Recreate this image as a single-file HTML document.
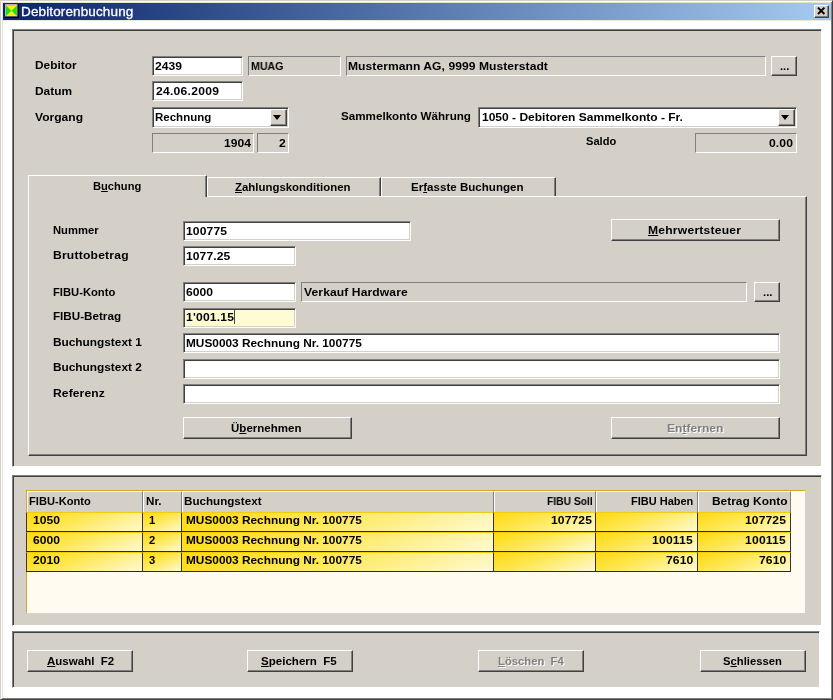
<!DOCTYPE html>
<html lang="de">
<head>
<meta charset="utf-8">
<title>Debitorenbuchung</title>
<style>
*{box-sizing:border-box;margin:0;padding:0}
html,body{width:833px;height:700px;overflow:hidden;background:#fff}
body{position:relative;font:bold 11px "Liberation Sans",sans-serif;color:#000}
.a{position:absolute;white-space:nowrap}
.t{position:absolute;white-space:nowrap;height:16px;line-height:16px;will-change:transform;transform-origin:0 0}
u{text-decoration:underline;text-underline-offset:1px}
#frame{left:0;top:0;width:833px;height:700px;border:1px solid;border-color:#d4d0c8 #404040 #404040 #d4d0c8;box-shadow:inset 1px 1px 0 #fff,inset -1px -1px 0 #808080,inset 2px 2px 0 #e4e1da}
#title{left:3px;top:3px;width:828px;height:17px;background:linear-gradient(90deg,#0a246a 0%,#a6caf0 100%)}
.tt{color:#fff;font:normal 13.5px "Liberation Sans",sans-serif;height:17px;line-height:17px;-webkit-text-stroke:.3px #fff}
#close{left:814px;top:5px;width:15px;height:13px;background:#d4d0c8;border:1px solid;border-color:#fff #404040 #404040 #fff;box-shadow:inset -1px -1px 0 #808080}
.panel{background:#d4d0c8;border:1px solid;border-color:#808080 #fff #fff #808080;box-shadow:inset 1px 1px 0 #404040}
.in{background:#fff;border:1px solid;border-color:#808080 #fff #fff #808080;box-shadow:inset 1px 1px 0 #404040,inset -1px -1px 0 #d4d0c8}
.ro{background:#d4d0c8;border:1px solid;border-color:#808080 #fff #fff #808080}
.btn{background:#d4d0c8;border:1px solid;border-color:#fff #404040 #404040 #fff;box-shadow:inset -1px -1px 0 #808080}
.dis{color:#808080;text-shadow:1px 1px 0 #fff}
.dd{width:17px;height:17px;right:1px;top:1px}
.dd i{position:absolute;left:2px;top:5px;width:0;height:0;border:4.5px solid transparent;border-top:5px solid #000;border-bottom:0}
.tab{background:#d4d0c8;border-top:1px solid #fff;border-left:1px solid #fff;border-right:1px solid #404040;box-shadow:inset -1px 0 0 #808080}
.hd{background:#d4d0c8;height:21px;top:491px;border-left:1px solid #fff;border-top:1px solid #fff;border-right:1px solid #808080}
.c{height:20px;border-right:1px solid #333;border-bottom:1px solid #2a2a20;border-top:1px solid #f2cc10;background:linear-gradient(160deg,#ffd90f 0%,#ffe752 42%,#fffad2 100%)}
.c0{border-left:1px solid #4a3608}
</style>
</head>
<body>
<div id="frame" class="a"></div>
<div id="title" class="a"></div>
<div class="a" style="left:3px;top:20px;width:828px;height:1px;background:#ebe8e2"></div>
<svg class="a" style="left:5px;top:4px" width="14" height="14" viewBox="0 0 14 14"><rect width="14" height="14" fill="#000"/><rect width="12.5" height="12.5" fill="#b8b0b0"/><polygon points="1,1.6 6.5,6.8 1,12" fill="#10e810"/><polygon points="11.8,1.6 6.5,6.8 11.8,12" fill="#10e810"/><polygon points="1,1.6 11.8,1.6 6.5,6.8" fill="#f8f400"/><polygon points="1,12 11.8,12 6.5,6.8" fill="#f8f400"/><path d="M1 1.6 L11.8 12" stroke="#b0b090" stroke-width=".6"/></svg>
<div id="close" class="a"><svg width="13" height="11" viewBox="0 0 13 11" style="position:absolute;left:0;top:0"><path d="M3 1.6 L9.4 8 M9.4 1.6 L3 8" stroke="#000" stroke-width="2" fill="none"/></svg></div>
<div class="a panel" style="left:12px;top:29px;width:810px;height:438px"></div>
<div class="a in" style="left:152px;top:56px;width:91px;height:20px"></div>
<div class="a ro" style="left:248px;top:56px;width:93px;height:20px"></div>
<div class="a ro" style="left:346px;top:56px;width:420px;height:20px"></div>
<div class="a btn" style="left:771px;top:56px;width:26px;height:20px"></div>
<div class="a in" style="left:152px;top:81px;width:91px;height:20px"></div>
<div class="a in" style="left:152px;top:107px;width:137px;height:21px"><div class="a btn dd"><i></i></div></div>
<div class="a in" style="left:478px;top:107px;width:319px;height:21px"><div class="a btn dd"><i></i></div></div>
<div class="a ro" style="left:152px;top:133px;width:102px;height:20px"></div>
<div class="a ro" style="left:257px;top:133px;width:32px;height:20px"></div>
<div class="a ro" style="left:695px;top:133px;width:102px;height:20px"></div>
<div class="a " style="left:28px;top:196px;width:779px;height:260px;background:#d4d0c8;border:1px solid;border-color:#fff #404040 #404040 #fff;box-shadow:inset -1px -1px 0 #808080"></div>
<div class="a tab" style="left:28px;top:175px;width:179px;height:22px"></div>
<div class="a tab" style="left:207px;top:177px;width:174px;height:19px"></div>
<div class="a tab" style="left:381px;top:177px;width:175px;height:19px"></div>
<div class="a in" style="left:183px;top:221px;width:228px;height:20px"></div>
<div class="a btn" style="left:611px;top:219px;width:169px;height:22px"></div>
<div class="a in" style="left:183px;top:246px;width:113px;height:20px"></div>
<div class="a in" style="left:183px;top:282px;width:113px;height:20px"></div>
<div class="a ro" style="left:301px;top:282px;width:446px;height:20px"></div>
<div class="a btn" style="left:754px;top:282px;width:26px;height:20px"></div>
<div class="a in" style="left:183px;top:308px;width:113px;height:20px;background:#fffbd2"></div>
<div class="a in" style="left:183px;top:333px;width:597px;height:20px"></div>
<div class="a in" style="left:183px;top:359px;width:597px;height:20px"></div>
<div class="a in" style="left:183px;top:384px;width:597px;height:20px"></div>
<div class="a btn" style="left:183px;top:417px;width:169px;height:22px"></div>
<div class="a btn" style="left:611px;top:417px;width:169px;height:22px"></div>
<div class="a " style="left:234px;top:310px;width:1px;height:14px;background:#404858"></div>
<div class="a panel" style="left:12px;top:475px;width:810px;height:151px"></div>
<div class="a " style="left:26px;top:490px;width:779px;height:123px;background:#fffbf0;border-top:1px solid #e0a030;border-left:1px solid #e0a030"></div>
<div class="a hd" style="left:27px;width:116px"></div>
<div class="a hd" style="left:143px;width:39px"></div>
<div class="a hd" style="left:182px;width:312px"></div>
<div class="a hd" style="left:494px;width:102px"></div>
<div class="a hd" style="left:596px;width:102px"></div>
<div class="a hd" style="left:698px;width:93px"></div>
<div class="a c c0" style="left:26px;top:512px;width:117px"></div>
<div class="a c" style="left:143px;top:512px;width:39px"></div>
<div class="a c" style="left:182px;top:512px;width:312px"></div>
<div class="a c" style="left:494px;top:512px;width:102px"></div>
<div class="a c" style="left:596px;top:512px;width:102px"></div>
<div class="a c" style="left:698px;top:512px;width:93px"></div>
<div class="a c c0" style="left:26px;top:532px;width:117px"></div>
<div class="a c" style="left:143px;top:532px;width:39px"></div>
<div class="a c" style="left:182px;top:532px;width:312px"></div>
<div class="a c" style="left:494px;top:532px;width:102px"></div>
<div class="a c" style="left:596px;top:532px;width:102px"></div>
<div class="a c" style="left:698px;top:532px;width:93px"></div>
<div class="a c c0" style="left:26px;top:552px;width:117px"></div>
<div class="a c" style="left:143px;top:552px;width:39px"></div>
<div class="a c" style="left:182px;top:552px;width:312px"></div>
<div class="a c" style="left:494px;top:552px;width:102px"></div>
<div class="a c" style="left:596px;top:552px;width:102px"></div>
<div class="a c" style="left:698px;top:552px;width:93px"></div>
<div class="a panel" style="left:12px;top:631px;width:808px;height:57px"></div>
<div class="a btn" style="left:27px;top:650px;width:106px;height:22px"></div>
<div class="a btn" style="left:247px;top:650px;width:106px;height:22px"></div>
<div class="a btn" style="left:478px;top:650px;width:106px;height:22px"></div>
<div class="a btn" style="left:700px;top:650px;width:106px;height:22px"></div>
<span class="t tt" style="left:21.00px;top:3px;letter-spacing:0.13px">Debitorenbuchung</span>
<span class="t" style="left:35.00px;top:57px;transform:scaleX(1.078)">Debitor</span>
<span class="t" style="left:35.00px;top:83px;transform:scaleX(1.081)">Datum</span>
<span class="t" style="left:35.00px;top:109px;transform:scaleX(1.096)">Vorgang</span>
<span class="t" style="left:155.00px;top:58px;letter-spacing:0.02px;transform:scaleX(1.100)">2439</span>
<span class="t" style="left:250.75px;top:58px;transform:scaleX(0.967)">MUAG</span>
<span class="t" style="left:348.00px;top:58px;letter-spacing:0.04px;transform:scaleX(1.100)">Mustermann AG, 9999 Musterstadt</span>
<span class="t" style="left:779.70px;top:58px;transform:scaleX(1.014)">...</span>
<span class="t" style="left:156.25px;top:83px;letter-spacing:0.24px;transform:scaleX(1.100)">24.06.2009</span>
<span class="t" style="left:155.00px;top:109px;transform:scaleX(1.046)">Rechnung</span>
<span class="t" style="left:341.00px;top:108px;transform:scaleX(1.058)">Sammelkonto Währung</span>
<span class="t" style="left:482.00px;top:109px;transform:scaleX(1.092)">1050 - Debitoren Sammelkonto - Fr.</span>
<span class="t" style="left:223.75px;top:135px;letter-spacing:0.02px;transform:scaleX(1.100)">1904</span>
<span class="t" style="left:278.75px;top:135px;letter-spacing:0.24px;transform:scaleX(1.100)">2</span>
<span class="t" style="left:585.80px;top:133px;transform:scaleX(1.008)">Saldo</span>
<span class="t" style="left:769.00px;top:135px;letter-spacing:0.10px;transform:scaleX(1.100)">0.00</span>
<span class="t" style="left:93.00px;top:178px;transform:scaleX(1.012)">B<u>u</u>chung</span>
<span class="t" style="left:234.50px;top:179px;transform:scaleX(1.038)"><u>Z</u>ahlungskonditionen</span>
<span class="t" style="left:411.25px;top:179px;transform:scaleX(1.052)">Er<u>f</u>asste Buchungen</span>
<span class="t" style="left:53.20px;top:222px;transform:scaleX(1.021)">Nummer</span>
<span class="t" style="left:53.20px;top:247px;letter-spacing:0.19px;transform:scaleX(1.100)">Bruttobetrag</span>
<span class="t" style="left:53.20px;top:284px;transform:scaleX(1.020)">FIBU-Konto</span>
<span class="t" style="left:53.20px;top:308px;transform:scaleX(1.060)">FIBU-Betrag</span>
<span class="t" style="left:53.20px;top:334px;transform:scaleX(1.076)">Buchungstext 1</span>
<span class="t" style="left:53.20px;top:359px;transform:scaleX(1.076)">Buchungstext 2</span>
<span class="t" style="left:53.20px;top:385px;letter-spacing:0.08px;transform:scaleX(1.100)">Referenz</span>
<span class="t" style="left:185.75px;top:223px;letter-spacing:0.13px;transform:scaleX(1.100)">100775</span>
<span class="t" style="left:185.75px;top:248px;letter-spacing:0.07px;transform:scaleX(1.100)">1077.25</span>
<span class="t" style="left:185.50px;top:284px;letter-spacing:0.02px;transform:scaleX(1.100)">6000</span>
<span class="t" style="left:185.50px;top:309px;letter-spacing:0.18px;transform:scaleX(1.100)">1'001.15</span>
<span class="t" style="left:185.50px;top:335px;transform:scaleX(1.077)">MUS0003 Rechnung Nr. 100775</span>
<span class="t" style="left:303.75px;top:284px;letter-spacing:0.09px;transform:scaleX(1.100)">Verkauf Hardware</span>
<span class="t" style="left:762.80px;top:284px;transform:scaleX(1.036)">...</span>
<span class="t" style="left:648.00px;top:222px;letter-spacing:0.20px;transform:scaleX(1.100)"><u>M</u>ehrwertsteuer</span>
<span class="t" style="left:230.75px;top:420px;transform:scaleX(1.048)">Ü<u>b</u>ernehmen</span>
<span class="t dis" style="left:667.00px;top:420px;transform:scaleX(1.098)">En<u>t</u>fernen</span>
<span class="t" style="left:28.75px;top:493px;transform:scaleX(1.011)">FIBU-Konto</span>
<span class="t" style="left:145.75px;top:493px;transform:scaleX(1.055)">Nr.</span>
<span class="t" style="left:184.25px;top:493px;transform:scaleX(1.057)">Buchungstext</span>
<span class="t" style="left:546.75px;top:493px;transform:scaleX(0.936)">FIBU Soll</span>
<span class="t" style="left:630.50px;top:493px">FIBU Haben</span>
<span class="t" style="left:712.00px;top:493px;transform:scaleX(1.084)">Betrag Konto</span>
<span class="t" style="left:32.50px;top:512px;letter-spacing:0.02px;transform:scaleX(1.100)">1050</span>
<span class="t" style="left:148.75px;top:512px;transform:scaleX(1.020)">1</span>
<span class="t" style="left:185.50px;top:512px;transform:scaleX(1.077)">MUS0003 Rechnung Nr. 100775</span>
<span class="t" style="left:550.77px;top:512px;letter-spacing:0.09px;transform:scaleX(1.100)">107725</span>
<span class="t" style="left:745.27px;top:512px;letter-spacing:0.09px;transform:scaleX(1.100)">107725</span>
<span class="t" style="left:32.50px;top:532px;letter-spacing:0.02px;transform:scaleX(1.100)">6000</span>
<span class="t" style="left:148.75px;top:532px;transform:scaleX(1.020)">2</span>
<span class="t" style="left:185.50px;top:532px;transform:scaleX(1.077)">MUS0003 Rechnung Nr. 100775</span>
<span class="t" style="left:652.02px;top:532px;letter-spacing:0.19px;transform:scaleX(1.100)">100115</span>
<span class="t" style="left:745.27px;top:532px;letter-spacing:0.19px;transform:scaleX(1.100)">100115</span>
<span class="t" style="left:32.50px;top:552px;letter-spacing:0.02px;transform:scaleX(1.100)">2010</span>
<span class="t" style="left:148.75px;top:552px;transform:scaleX(1.020)">3</span>
<span class="t" style="left:185.50px;top:552px;transform:scaleX(1.077)">MUS0003 Rechnung Nr. 100775</span>
<span class="t" style="left:665.68px;top:552px;letter-spacing:0.09px;transform:scaleX(1.100)">7610</span>
<span class="t" style="left:758.93px;top:552px;letter-spacing:0.09px;transform:scaleX(1.100)">7610</span>
<span class="t" style="left:47.00px;top:653px;transform:scaleX(1.047)"><u>A</u>uswahl&nbsp; F2</span>
<span class="t" style="left:261.25px;top:653px;transform:scaleX(1.050)"><u>S</u>peichern&nbsp; F5</span>
<span class="t dis" style="left:498.00px;top:653px;transform:scaleX(1.024)"><u>L</u>öschen&nbsp; F4</span>
<span class="t" style="left:722.50px;top:653px;transform:scaleX(1.022)">S<u>c</u>hliessen</span>
</body>
</html>
